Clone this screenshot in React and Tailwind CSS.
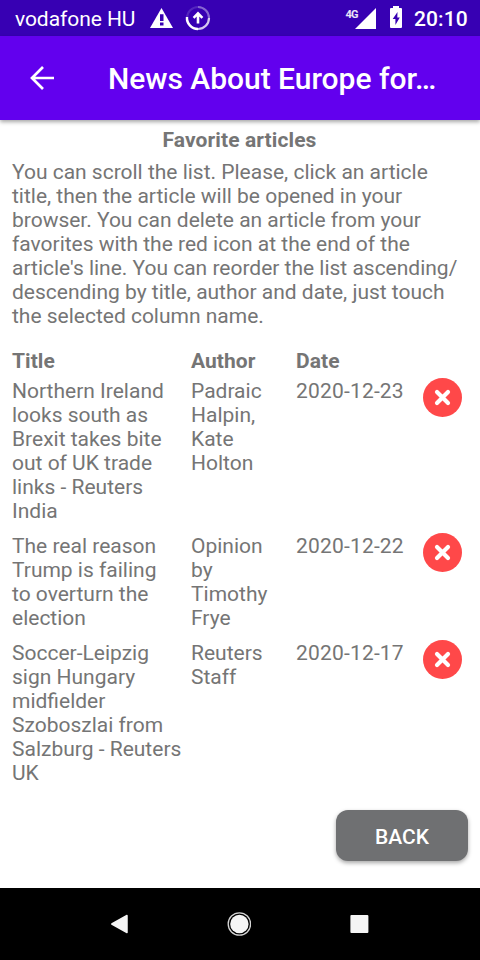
import React from "react";

const intro = [
  "You can scroll the list. Please, click an article",
  "title, then the article will be opened in your",
  "browser. You can delete an article from your",
  "favorites with the red icon at the end of the",
  "article's line. You can reorder the list ascending/",
  "descending by title, author and date, just touch",
  "the selected column name.",
];

const articles = [
  {
    title: ["Northern Ireland", "looks south as", "Brexit takes bite", "out of UK trade", "links - Reuters", "India"],
    author: ["Padraic", "Halpin,", "Kate", "Holton"],
    date: "2020-12-23",
  },
  {
    title: ["The real reason", "Trump is failing", "to overturn the", "election"],
    author: ["Opinion", "by", "Timothy", "Frye"],
    date: "2020-12-22",
  },
  {
    title: ["Soccer-Leipzig", "sign Hungary", "midfielder", "Szoboszlai from", "Salzburg - Reuters", "UK"],
    author: ["Reuters", "Staff"],
    date: "2020-12-17",
  },
];

function Lines({ lines }) {
  return lines.map((line) => (
    <span key={line} className="block whitespace-nowrap">
      {line}
    </span>
  ));
}

function StatusBar() {
  return (
    <div className="flex h-9 shrink-0 items-center bg-[#3700b3] pl-[15px] pr-3 text-white">
      <span className="w-[135px] whitespace-nowrap pt-px text-[21px] leading-[36px] tracking-[-0.06px]">vodafone HU</span>
      <svg className="h-[20px] w-[23px]" viewBox="0 0 23 20">
        <path d="M11.5 0 L23 20 H0 Z" fill="#fff" />
        <path d="M10 6.300h3.500v6.700H10zM10 14.500h3.500v3H10z" fill="#3700b3" />
      </svg>
      <svg className="ml-[12px] h-[26px] w-[26px]" viewBox="0 0 26 26" fill="none">
        <circle cx="13" cy="13" r="11" stroke="#fff" strokeOpacity="0.15" strokeWidth="2" />
        <path d="M2 12a11 11 0 0 0 11 12" stroke="#fff" strokeWidth="2.4" />
        <path d="M13 24A11 11 0 0 0 24 13" stroke="#fff" strokeOpacity="0.75" strokeWidth="2.2" />
        <path d="M24 13A11 11 0 0 0 13 2" stroke="#fff" strokeOpacity="0.3" strokeWidth="2" />
        <path d="M13 18.5V9M8.6 12.8 13 8.4l4.400 4.400" stroke="#fff" strokeWidth="2.6" />
      </svg>
      <div className="ml-auto flex items-center">
        <span className="mb-[8px] mr-[-3px] text-[11px] font-bold leading-none tracking-[-0.6px] text-white/90">4G</span>
        <svg className="h-[21px] w-[21px]" viewBox="0 0 21 21">
          <path d="M21 0V21H0Z" fill="#fff" />
        </svg>
        <svg className="mb-[2px] ml-[14px] h-[22px] w-[12px]" viewBox="0 0 12 22">
          <path d="M3 0h6v2h2q1 0 1 1v18q0 1-1 1H1q-1 0-1-1V3q0-1 1-1h2z" fill="#fff" />
          <path d="M7.500 6 2.700 13h2.700v6L9.800 11.500H7.300z" fill="#3700b3" />
        </svg>
        <span className="ml-[12px] w-[54px] whitespace-nowrap pt-px text-[21px] font-medium leading-[36px] tracking-[0.1px]">20:10</span>
      </div>
    </div>
  );
}

function AppBar() {
  return (
    <header className="relative z-10 flex h-[84px] shrink-0 items-center bg-[#6200ee] pl-[30px] text-white shadow-[0_2px_4px_rgba(0,0,0,0.35)]">
      <svg className="h-6 w-6" viewBox="0 0 24 24" fill="none" stroke="#fff" strokeWidth="2.700">
        <path d="M24 12H2M13 1 2 12l11 11" />
      </svg>
      <h1 className="ml-[54px] whitespace-nowrap pt-[2px] text-[30px] font-medium leading-[36px] tracking-[-0.03px]">News About Europe for…</h1>
    </header>
  );
}

function DeleteIcon() {
  return (
    <svg className="ml-auto mr-[6px] mt-[-1px] h-[39px] w-[39px]" viewBox="0 0 39 39">
      <circle cx="19.500" cy="19.500" r="19.500" fill="#ff4849" />
      <path d="m14 14 11 11M25 14 14 25" stroke="#fff" strokeWidth="4.200" strokeLinecap="round" />
    </svg>
  );
}

function NavBar() {
  return (
    <nav className="flex h-[72px] shrink-0 items-center bg-black pl-[110px]">
      <svg className="h-[20px] w-[18px]" viewBox="0 0 18 20">
        <path d="M1.800 10 17 1.500v17z" fill="#f5f5f5" stroke="#f5f5f5" strokeWidth="1.500" strokeLinejoin="round" />
      </svg>
      <svg className="ml-[99px] h-6 w-6" viewBox="0 0 24 24">
        <circle cx="12.400" cy="12" r="11.200" fill="none" stroke="#d5d5d5" strokeWidth="1.300" />
        <circle cx="12.400" cy="12" r="9.200" fill="#f5f5f5" />
      </svg>
      <svg className="ml-[99px] h-[18px] w-[19px]" viewBox="0 0 19 18">
        <rect x="0.400" width="18" height="18" rx="1" fill="#f5f5f5" />
      </svg>
    </nav>
  );
}

export default function App() {
  return (
    <div className="flex h-[960px] w-[480px] flex-col overflow-hidden bg-white font-['Roboto',sans-serif]">
      <StatusBar />
      <AppBar />
      <main className="flex flex-1 flex-col px-3 pt-2 text-[21px] leading-6 text-[#757575]">
        <h2 className="pr-px text-center font-bold tracking-[0.1px]">Favorite articles</h2>
        <p className="mt-2 tracking-[-0.01px]">
          <Lines lines={intro} />
        </p>
        <div className="mt-[21px] grid grid-cols-[179px_105px_1fr] font-bold tracking-[0.05px]">
          <span>Title</span>
          <span>Author</span>
          <span>Date</span>
        </div>
        <div className="mt-[6px] flex flex-col gap-[11px]">
          {articles.map((article) => (
            <div key={article.date} className="grid grid-cols-[179px_105px_108px_1fr]">
              <div>
                <Lines lines={article.title} />
              </div>
              <div>
                <Lines lines={article.author} />
              </div>
              <span className="whitespace-nowrap tracking-[0.18px]">{article.date}</span>
              <DeleteIcon />
            </div>
          ))}
        </div>
        <button className="mb-[27px] ml-auto mt-auto h-[51px] w-[132px] rounded-[12px] bg-[#6f7072] pt-[2px] text-[21px] font-medium text-white shadow-[0_2px_4px_rgba(0,0,0,0.35)]">
          BACK
        </button>
      </main>
      <NavBar />
    </div>
  );
}
